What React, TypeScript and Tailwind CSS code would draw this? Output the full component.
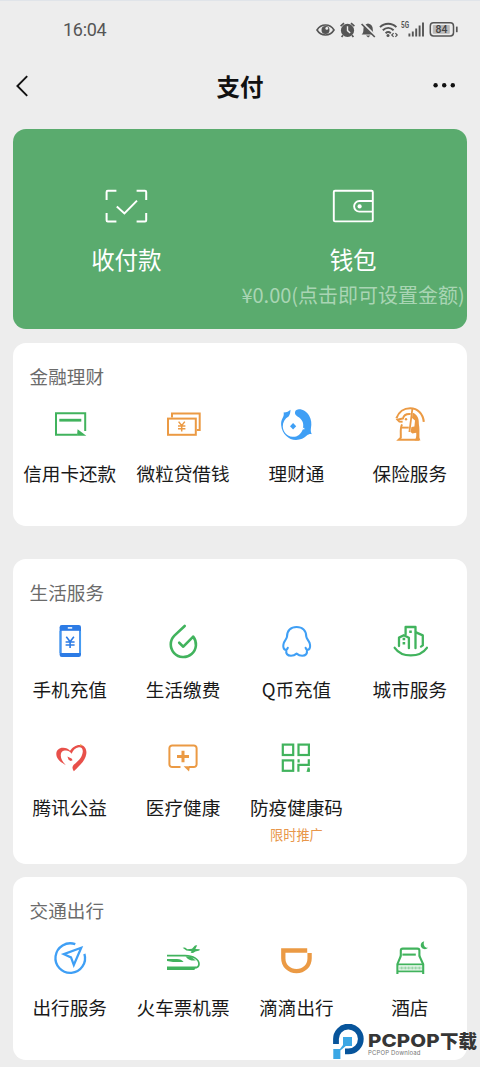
import React from 'react'

const GREEN = '#41b35d'
const ORANGE = '#eb9a44'
const BLUE = '#3f9ff5'

interface IconProps {
  children: React.ReactNode
}

const Icon: React.FC<IconProps> = ({ children }) => (
  <svg width="40" height="40" viewBox="0 0 40 40" fill="none" className="block overflow-visible">
    {children}
  </svg>
)

const CreditCardIcon = () => (
  <Icon>
    <path d="M27 29.7H6V8.3H35.2V26" stroke={GREEN} strokeWidth="2" />
    <path d="M9.3 15.2H31.3" stroke={GREEN} strokeWidth="2.8" />
    <path d="M27.6 24.2L36.3 30.7H27Z" fill={GREEN} />
  </Icon>
)

const LoanIcon = () => (
  <Icon>
    <path d="M9 12.5V8.6H36.7V25H33.8" stroke={ORANGE} strokeWidth="2" />
    <rect x="5" y="13.6" width="27.8" height="16.2" stroke={ORANGE} strokeWidth="2" />
    <path d="M15.6 16.6L18.7 20.6L21.8 16.6M18.7 20.6V26.6M15 20.9H22.4M15 23.7H22.4" stroke={ORANGE} strokeWidth="1.5" />
  </Icon>
)

const WealthIcon = () => (
  <Icon>
    <path
      d="M14.5 4.8C12.8 6.2 11 7.6 7.6 7.6C8 9.5 7.8 11 6.6 13C5.3 15.2 4.9 17.5 5.2 20.5C6 28.8 12.5 35 20 35C24.6 35 28.3 33.2 30.8 30.6C32.6 29.2 34 28.8 35.8 29.2C34.8 27 34.6 25.6 34.9 23.5C35.8 19 35.4 14.6 33.2 10.8C30.8 6.6 27 4.2 22.8 4.3C20 4.4 18.6 6.4 19 8.4C19.4 10.4 21.4 11 23.2 12.6C27 15.6 28 19.3 26.8 24.2C25 29.4 20.8 32.2 16.4 31.8C11 31.4 7 26.8 6.8 21.4C6.7 17 8.8 13.6 12.6 11.4C14 9.8 14.4 7.4 14.5 4.8Z"
      fill={BLUE}
    />
    <path d="M17.1 18L20.2 21.3L17.1 24.6L14 21.3Z" fill={BLUE} />
    <path d="M28 22.5L25.6 24.6L28.6 24.2Z" fill="#fff" />
  </Icon>
)

const InsuranceIcon = () => (
  <Icon>
    <path d="M6.4 13.4C8.6 7 14 3.3 20.2 3.3C27.6 3.3 33 8.6 33.8 16.8" stroke={ORANGE} strokeWidth="2.1" />
    <path d="M22.4 3.5L19.4 27" stroke={ORANGE} strokeWidth="1.8" />
    <path
      d="M22.6 7.8C26.8 9 29 13 28.8 17.6C28.7 19.8 29.4 21.4 29.4 24V32.4L30.4 35.6H24.6C26 33.6 26.6 31.2 26.2 27.8L22.4 28.4L20.6 27L21.4 22L24.4 21.6L25 15.4L22 13Z"
      fill={ORANGE}
    />
    <path d="M20.6 9C16.4 8.6 13.6 10.6 13 13.4C11 13.8 9.2 14.4 7.6 14.8L9.4 16.6L12.6 16.8" stroke={ORANGE} strokeWidth="2" />
    <path d="M12 19.4C10.8 22 10.6 25.4 10.8 29V32.6L8.6 34.8H29" stroke={ORANGE} strokeWidth="2" />
    <path d="M12 22.6H18.8" stroke={ORANGE} strokeWidth="1.9" />
    <circle cx="16" cy="14.2" r="1.2" fill={ORANGE} />
  </Icon>
)

const PhoneIcon = () => (
  <Icon>
    <rect x="9.6" y="4" width="21.4" height="32" rx="2.2" fill="#2c7be5" />
    <rect x="11.6" y="9.8" width="17.6" height="22.2" fill="#fff" />
    <path d="M10.2 10V32M30.4 10V32" stroke="#459cf2" strokeWidth="1.3" />
    <path d="M17.8 6.9H22.2" stroke="#fff" strokeWidth="1.5" />
    <path d="M16.3 15.8L20.1 20.7L23.9 15.8M20.1 20.7V27M15.6 21H24.6M15.6 24H24.6" stroke="#2c7be5" strokeWidth="1.6" />
  </Icon>
)

const BillIcon = () => (
  <Icon>
    <path
      d="M21.7 5L11.4 14.6A12.6 12.6 0 1 0 30.2 15.6L20.3 25.7L16.2 21.7"
      stroke={GREEN}
      strokeWidth="2.6"
      strokeLinecap="round"
      strokeLinejoin="round"
    />
  </Icon>
)

const QCoinIcon = () => (
  <Icon>
    <path
      d="M11.8 26.8C11.4 28.4 9.8 29.2 8.8 28.6C7.2 27.4 7 24.6 7.8 22C8.6 19.6 10.8 17.6 11 15.6C11 9.6 14.8 6 20.6 6C26.4 6 30.1 9.6 30.3 15.6C30.6 17.6 32.6 19.6 33.6 22C34.4 24.6 34.2 27.4 32.6 28.6C31.4 29.2 30 28.4 29.6 26.8M10.4 29.2C9.6 32.6 11.4 34.8 15 34.8C17.6 34.8 19 34 20.6 32.6C22.2 34 23.6 34.8 26.2 34.8C29.8 34.8 31.6 32.6 30.8 29.2"
      stroke={BLUE}
      strokeWidth="2.1"
      strokeLinecap="round"
      strokeLinejoin="round"
    />
  </Icon>
)

const CityIcon = () => (
  <Icon>
    <g stroke={GREEN} strokeWidth="2.3" strokeLinecap="round" strokeLinejoin="round">
      <path d="M9 25V16.6L13.8 14.2L18.9 16.8V27.2" />
      <path d="M15.6 13.6V6H25.5V27.2" />
      <path d="M26 11.4L32.8 14.4V24.4L31 25.6" />
      <path d="M4.7 26.8C8.4 32 14 34.4 20.8 34.4C27.6 34.4 33.2 32 36.9 26.8" />
    </g>
    <path d="M19.2 9.4H21.8V12H19.2ZM12.6 16.8H15.2V19.2H12.6ZM12.6 21H15.2V23.4H12.6Z" fill={GREEN} />
  </Icon>
)

const CharityIcon = () => (
  <Icon>
    <path
      d="M15.8 27.2C9.6 23.6 6.2 20 6.3 15.8C6.4 12 9.4 9.5 13.2 9.7C16 9.8 18.4 10.8 20 12.8C22.4 9 26.6 6.4 30.6 7C34.8 7.7 37 11.4 36.3 16C35.2 22.6 29.8 27.6 23.8 33.2C22 30.6 22 28.8 24 26.6C29 22.6 32.4 19 32.8 13.6C32.9 10.6 31.4 8.9 28.8 9.2C25.4 9.8 23.2 11.8 21.6 15.8C19.6 12.8 17 12 14.6 12.6C11.8 13.2 10.6 15 10.8 17.8C11 21.2 12.8 23.8 15.8 27.2Z"
      fill="#e8504a"
    />
    <path d="M17.4 18.6L19.4 19.6L21.6 20.4L22.6 22.2L20.6 23L18.6 21.8Z" fill="#e8504a" />
    <circle cx="30.7" cy="7.2" r="0.9" fill={ORANGE} />
  </Icon>
)

const MedicalIcon = () => (
  <Icon>
    <path
      d="M17.5 29H9.2A2.8 2.8 0 0 1 6.4 26.2V10.2A2.8 2.8 0 0 1 9.2 7.4H30.8A2.8 2.8 0 0 1 33.6 10.2V26.2A2.8 2.8 0 0 1 30.8 29H26"
      stroke={ORANGE}
      strokeWidth="2"
    />
    <path d="M20.6 28.2H27L26 33.4Z" fill={ORANGE} />
    <path d="M20 12.8V24.2M14 18.5H26" stroke={ORANGE} strokeWidth="3" />
  </Icon>
)

const HealthCodeIcon = () => (
  <Icon>
    <g stroke={GREEN} strokeWidth="2.2">
      <rect x="6.8" y="6.6" width="10.4" height="10.4" />
      <rect x="22.5" y="6.6" width="10.4" height="10.4" />
      <rect x="6.8" y="22.4" width="10.4" height="10.4" />
      <path d="M32.8 21.2V26.8H22.4V33.8M22.6 21.2V24.4M32.6 29.4V33.8" />
    </g>
    <path d="M31.6 31H33.8V33.8H30.4Z" fill={GREEN} />
  </Icon>
)

const TravelIcon = () => (
  <Icon>
    <path d="M25.3 5.2A14.8 14.8 0 1 0 34.4 14.8" stroke={BLUE} strokeWidth="2.3" />
    <path d="M31.2 8.8L13.8 15.2L21 18.4L23.8 26Z" stroke={BLUE} strokeWidth="2.2" />
  </Icon>
)

const TrainIcon = () => (
  <Icon>
    <path d="M4 16.6H22C30.6 16.6 36 20.6 36 25C36 27.6 33.6 28.8 31 29" stroke={GREEN} strokeWidth="1.7" />
    <path d="M4 27.4H33L31.4 31H4Z" fill={GREEN} />
    <path d="M4 20H14C17 20 19.2 21 20.6 23H10L4 22Z" fill={GREEN} />
    <path d="M22.6 17.4L28.4 18L32.8 21.4C29.4 22 25.2 21.2 22.6 17.4Z" fill={GREEN} />
    <path
      d="M19.6 8.8L22 8.6L24.4 10.2L29 9.8L32 6.6L34.2 6.2L32.4 10L36.8 10.2L36.4 11.6L32.4 12.4L30 14L27.6 13.8L28.6 12.2L23.4 11.6Z"
      fill={GREEN}
    />
  </Icon>
)

const DidiIcon = () => (
  <Icon>
    <path d="M31.2 11.5H7.3V19.2C7.3 26.8 13.2 32.2 20.5 32.2C27.8 32.2 33.6 26.8 33.6 19.2V14" stroke={ORANGE} strokeWidth="4.3" />
  </Icon>
)

const HotelIcon = () => (
  <Icon>
    <g stroke={GREEN} strokeWidth="2.1">
      <path d="M10.8 17.6V11.6A2 2 0 0 1 12.8 9.6H27.4A2 2 0 0 1 29.4 11.6V17.6" />
      <path d="M10.8 17L7.4 25.2V35M29.4 17L33.2 25.2V35" />
      <path d="M12.4 15.6H25.8" />
      <path d="M7 25.4H33.6M7 32.4H33.6" strokeWidth="1.7" />
      <path d="M9.5 29H31.5" strokeWidth="3" strokeDasharray="1 .4" opacity="0.6" />
    </g>
    <path d="M34.2 2.2C30.8 3 29.8 6.6 31.8 8.8C33.6 10.8 36.4 10.6 38 8.8C34.6 9 32.8 5.6 34.2 2.2Z" fill={GREEN} />
  </Icon>
)

interface Service {
  label: string
  icon: React.ReactNode
  note?: string
}

const finance: Service[] = [
  { label: '信用卡还款', icon: <CreditCardIcon /> },
  { label: '微粒贷借钱', icon: <LoanIcon /> },
  { label: '理财通', icon: <WealthIcon /> },
  { label: '保险服务', icon: <InsuranceIcon /> },
]

const life: Service[] = [
  { label: '手机充值', icon: <PhoneIcon /> },
  { label: '生活缴费', icon: <BillIcon /> },
  { label: 'Q币充值', icon: <QCoinIcon /> },
  { label: '城市服务', icon: <CityIcon /> },
  { label: '腾讯公益', icon: <CharityIcon /> },
  { label: '医疗健康', icon: <MedicalIcon /> },
  { label: '防疫健康码', icon: <HealthCodeIcon />, note: '限时推广' },
]

const transport: Service[] = [
  { label: '出行服务', icon: <TravelIcon /> },
  { label: '火车票机票', icon: <TrainIcon /> },
  { label: '滴滴出行', icon: <DidiIcon /> },
  { label: '酒店', icon: <HotelIcon /> },
]

const StatusBar = () => (
  <div className="flex h-[57px] items-center justify-between pl-[63px] pr-[21px] text-[#555]">
    <span className="font-['Roboto'] text-[18px] leading-5 tracking-[-0.3px]">16:04</span>
    <svg width="143" height="20" viewBox="0 0 143 20" fill="none">
      <path d="M1 10C5 3.4 14 3.4 18 10C14 16.6 5 16.6 1 10Z" stroke="#555" strokeWidth="1.6" />
      <circle cx="9.5" cy="10" r="4" fill="#555" />
      <circle cx="10.8" cy="8.4" r="1.4" fill="#ededed" />
      <circle cx="31.5" cy="10.4" r="6.6" fill="#555" />
      <path d="M24.6 6.2L28 3.2M38.4 6.2L35 3.2M27 15.2L25.6 17M36 15.2L37.4 17" stroke="#555" strokeWidth="1.7" />
      <path d="M31.5 6.2V10.6L34.2 13" stroke="#ededed" strokeWidth="1.4" />
      <path d="M45.6 14.6C47.2 12.8 47.4 11.4 47.4 9.4C47.4 6 49 4 52 3.4C55.4 4 56.8 6 56.8 9.4C56.8 11.4 57.2 13 58.6 14.6Z" fill="#555" />
      <path d="M50 15.6H54.4L52.2 17.6Z" fill="#555" />
      <path d="M46.4 3.2L59.8 16.4" stroke="#ededed" strokeWidth="2.4" />
      <path d="M45.6 4L58.8 17" stroke="#555" strokeWidth="1.7" />
      <path d="M64 7.2C68.6 2.6 75.8 2.6 80.4 7.2M66.8 10.3C70 7.2 74.4 7.2 77.6 10.3M69.6 13.2C71.2 11.8 73.2 11.8 74.8 13.2" stroke="#555" strokeWidth="1.9" />
      <circle cx="72" cy="15.6" r="1.5" fill="#555" />
      <path d="M77.6 13.2L75.8 15L77.6 16.8M79.4 13.2L81.2 15L79.4 16.8" stroke="#555" strokeWidth="1.2" />
      <text x="85" y="7.8" fontFamily="Roboto" fontWeight="700" fontSize="8.6" textLength="8" lengthAdjust="spacingAndGlyphs" fill="#555">
        5G
      </text>
      <path d="M93.4 13.6V16.4M96.8 11.4V16.4M100.2 8.4V16.4M103.6 5.4V16.4M107 2.4V16.4" stroke="#555" strokeWidth="1.9" />
      <rect x="114.3" y="2.8" width="23.2" height="13.2" rx="3.2" stroke="#555" strokeWidth="1.5" />
      <rect x="116.8" y="5" width="17" height="8.8" rx="0.8" fill="#b9b9b9" />
      <path d="M140.8 6.6V12.2" stroke="#555" strokeWidth="1.7" />
      <text x="119.6" y="13" fontFamily="Roboto" fontWeight="500" fontSize="10.4" fill="#444">
        84
      </text>
    </svg>
  </div>
)

const NavBar = () => (
  <div className="grid h-[55px] grid-cols-[1fr_auto_1fr] items-center pl-[15px] pr-[15px]">
    <svg width="24" height="24" viewBox="0 0 24 24" fill="none">
      <path d="M12.2 2.2L2.4 12L12.2 21.8" stroke="#111" strokeWidth="1.9" />
    </svg>
    <h1 className="text-[23.5px] font-bold leading-7 text-[#111]">支付</h1>
    <svg width="24" height="24" viewBox="0 0 24 24" fill="#111" className="mr-[9px] justify-self-end">
      <circle cx="3.6" cy="11.2" r="2.2" />
      <circle cx="12.2" cy="11.2" r="2.2" />
      <circle cx="20.8" cy="11.2" r="2.2" />
    </svg>
  </div>
)

const WalletPanel = () => (
  <div className="grid h-[200px] grid-cols-2 rounded-[13px] bg-[#5aab6e] pt-[57px] text-white">
    <div className="flex flex-col items-center">
      <svg width="44" height="40" viewBox="0 0 44 40" fill="none" stroke="#fff" strokeWidth="2">
        <path d="M2.6 14V6A1.2 1.2 0 0 1 3.8 4.8H12.4M32.6 4.8H41A1.2 1.2 0 0 1 42.2 6V14M42.2 27V34.2A1.2 1.2 0 0 1 41 35.4H32.6M12.4 35.4H3.8A1.2 1.2 0 0 1 2.6 34.2V27" />
        <path d="M12.8 20.6L20.4 27.4L33 14.6" />
      </svg>
      <span className="mt-[19px] text-[23.5px] leading-[28px]">收付款</span>
    </div>
    <div className="flex flex-col items-center">
      <svg width="44" height="40" viewBox="0 0 44 40" fill="none" stroke="#fff" strokeWidth="1.9">
        <rect x="2.8" y="4.8" width="39" height="30.6" rx="1.2" />
        <path d="M41.8 15H28.4A5.3 5.3 0 0 0 28.4 25.6H41.8" />
        <circle cx="28.6" cy="20.4" r="2.1" fill="#fff" stroke="none" />
      </svg>
      <span className="mt-[19px] text-[23.5px] leading-[28px]">钱包</span>
      <span className="mt-[10px] whitespace-nowrap text-[20px] leading-[24px] text-[#a9d5b4]">¥0.00(点击即可设置金额)</span>
    </div>
  </div>
)

interface SectionProps {
  title: string
  items: Service[]
  className: string
}

const Section: React.FC<SectionProps> = ({ title, items, className }) => (
  <section className={`rounded-[13px] bg-white pt-[21px] ${className}`}>
    <h2 className="pl-[16.6px] text-[18.6px] leading-6 text-[#6b6b6b]">{title}</h2>
    <div className="mt-[16.5px] grid grid-cols-4">
      {items.map((item) => (
        <div key={item.label} className="flex h-[117.5px] flex-col items-center">
          {item.icon}
          <span className="mt-[16.5px] whitespace-nowrap text-[18.6px] leading-6 text-[#191919]">{item.label}</span>
          {item.note && <span className="mt-[8px] text-[13.2px] leading-4 text-[#e8964a]">{item.note}</span>}
        </div>
      ))}
    </div>
  </section>
)

const Watermark = () => (
  <div className="absolute left-[333px] top-[1023px] flex gap-[4px]">
    <svg width="31" height="36" viewBox="0 0 31 36" fill="none">
      <path d="M3 20V15.6A12.4 12.4 0 1 1 15.4 27.4H12" stroke="#07549b" strokeWidth="5.8" />
      <path d="M10 13H19V22H12.8L7.4 26.6V35H0.3V25H7L10 21Z" fill="#3ba7e5" />
    </svg>
    <div className="flex flex-col pt-[6px]">
      <div className="flex h-[20px] items-center text-[#363636]">
        <span className="w-[72px] whitespace-nowrap">
          <span className="inline-block origin-left scale-x-[1.14] font-['Inter'] text-[18px] font-extrabold leading-5 tracking-[0.1px]">PCPOP</span>
        </span>
        <span className="text-[18.5px] font-black leading-5">下载</span>
      </div>
      <span className="-mt-px font-['Inter'] text-[6px] leading-[7px] tracking-[0.15px] text-[#777]">PCPOP Download</span>
    </div>
  </div>
)

const App: React.FC = () => {
  return (
    <div className="relative h-[1067px] w-[480px] overflow-hidden border-t border-[#e0e4e9] bg-[#ededed] px-[13px] font-['Noto_Sans_CJK_SC',sans-serif]">
      <div className="-mx-[13px]">
        <StatusBar />
        <NavBar />
      </div>
      <main className="mt-[16px] w-[453.5px]">
        <WalletPanel />
        <Section title="金融理财" items={finance} className="mt-[14px] h-[182.5px]" />
        <Section title="生活服务" items={life} className="mt-[33.5px] h-[304.5px]" />
        <Section title="交通出行" items={transport} className="mt-[13.5px] h-[183px]" />
      </main>
      <Watermark />
    </div>
  )
}

export default App
